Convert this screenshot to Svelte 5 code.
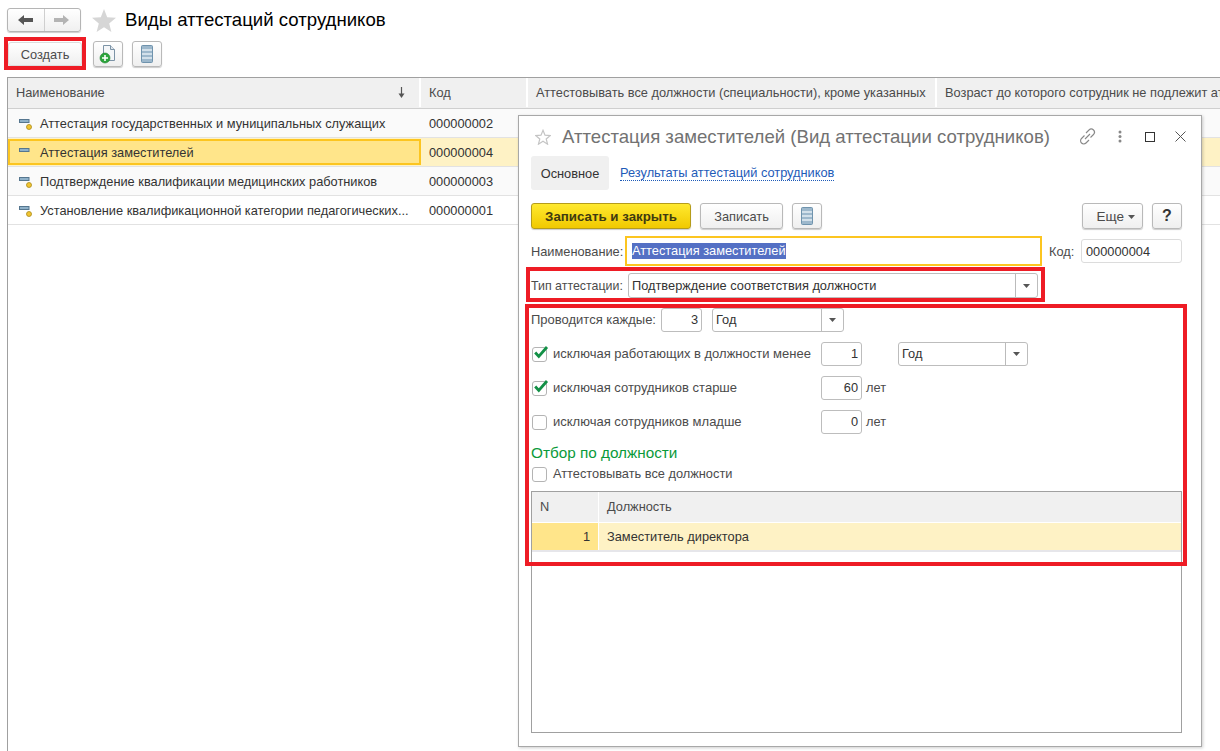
<script lang="ts">
	const rows = [
		{ name: 'Аттестация государственных и муниципальных служащих', code: '000000002', folder: false },
		{ name: 'Аттестация заместителей', code: '000000004', folder: true },
		{ name: 'Подтверждение квалификации медицинских работников', code: '000000003', folder: false },
		{ name: 'Установление квалификационной категории педагогических...', code: '000000001', folder: false }
	];
</script>

{#snippet listIcon()}
	<svg width="12" height="18" viewBox="0 0 12 18">
		<rect x="0.5" y="0.5" width="11" height="17" rx="1" fill="#9db8cc" stroke="#6f93ad" />
		<path d="M1 5h10M1 9h10M1 13h10" stroke="#e4edf3" stroke-width="1.4" />
	</svg>
{/snippet}

{#snippet tick()}
	<svg class="tick" width="17" height="16" viewBox="0 0 17 16">
		<path d="M3.200 7.500l3.600 4L15 2" fill="none" stroke="#129046" stroke-width="2.800" />
	</svg>
{/snippet}

{#snippet caret()}
	<svg width="7" height="4" viewBox="0 0 7 4"><path d="M0 0h7L3.500 4z" fill="#555" /></svg>
{/snippet}

<div class="page">
	<header class="top">
		<div class="nav">
			<button class="nav-btn" aria-label="Назад">
				<svg width="16" height="12" viewBox="0 0 16 12"><path d="M0 6l6-5v3h9v4H6v3z" fill="#555" /></svg>
			</button>
			<button class="nav-btn" aria-label="Вперед">
				<svg width="16" height="12" viewBox="0 0 16 12"><path d="M15 6L9 1v3H0v4h9v3z" fill="#b4b4b4" /></svg>
			</button>
		</div>
		<svg class="star" width="24" height="23" viewBox="0 0 24 23">
			<path d="M12 0l3.200 8.300 8.800.5-6.800 5.600 2.200 8.600L12 18.200l-7.400 4.800 2.200-8.600L0 8.800l8.800-.5z" fill="#d6d6d6" />
		</svg>
		<h1>Виды аттестаций сотрудников</h1>
	</header>

	<div class="toolbar">
		<button class="btn create">Создать</button>
		<button class="btn icon" aria-label="Создать документ">
			<svg width="18" height="20" viewBox="0 0 18 20">
				<path d="M4.500 1.500h7l4 4v11h-11z" fill="#f4f6f8" stroke="#7c93a6" />
				<path d="M11.500 1.500v4h4" fill="#dfe6ec" stroke="#7c93a6" />
				<circle cx="6" cy="14" r="5" fill="#2ca53c" stroke="#1d7f2d" stroke-width="0.6" />
				<path d="M6 11v6M3 14h6" stroke="#fff" stroke-width="1.6" />
			</svg>
		</button>
		<button class="btn icon" aria-label="Список">{@render listIcon()}</button>
	</div>

	<section class="list">
		<div class="list-head">
			<div class="th th-name">
				Наименование
				<svg class="sort" width="7" height="11" viewBox="0 0 7 11">
					<path d="M3.500 0v9" stroke="#555" stroke-width="1.200" /><path d="M.5 6.500L3.500 11l3-4.500z" fill="#555" />
				</svg>
			</div>
			<div class="th th-code">Код</div>
			<div class="th th-all">Аттестовывать все должности (специальности), кроме указанных</div>
			<div class="th th-age">Возраст до которого сотрудник не подлежит аттестации</div>
		</div>
		{#each rows as row}
			<div class="list-row" class:current={row.folder}>
				<div class="td td-name">
					<svg width="16" height="14" viewBox="0 0 16 14">
						<rect x="1.500" y="3.500" width="9.500" height="3" fill="#8fb1c9" stroke="#55768f" />
						{#if !row.folder}
							<circle cx="11" cy="11" r="2.500" fill="#f3c531" stroke="#a88a1c" stroke-width="0.8" />
						{/if}
					</svg>
					<span>{row.name}</span>
				</div>
				<div class="td td-code">{row.code}</div>
			</div>
		{/each}
	</section>

	<section class="dialog">
		<div class="dlg-title">
			<svg width="16" height="16" viewBox="0 0 24 23">
				<path d="M12 1.500l3 7.300 8 .5-6.200 5.100 2 7.800L12 17.800l-6.800 4.400 2-7.800L1 9.300l8-.5z" fill="#fff" stroke="#c4c4c4" stroke-width="1.800" />
			</svg>
			<h2>Аттестация заместителей (Вид аттестации сотрудников)</h2>
			<div class="win-icons">
				<svg width="17" height="17" viewBox="0 0 17 17">
					<path d="M7 5l3-3a3 3 0 0 1 4.500 4.500l-3 3M10 12l-3 3A3 3 0 0 1 2.500 10.500l3-3M6 11l5-5" fill="none" stroke="#888" stroke-width="1.100" />
				</svg>
				<svg class="dots" width="4" height="13" viewBox="0 0 4 13">
					<circle cx="2" cy="2" r="1.500" fill="#888" /><circle cx="2" cy="6.500" r="1.500" fill="#888" /><circle cx="2" cy="11" r="1.500" fill="#888" />
				</svg>
				<span class="maxi"></span>
				<svg class="close" width="11" height="11" viewBox="0 0 11 11"><path d="M.5.500l10 10M10.500.500l-10 10" stroke="#555" /></svg>
			</div>
		</div>

		<nav class="tabs">
			<span class="tab">Основное</span>
			<a href="#results" class="tab-link">Результаты аттестаций сотрудников</a>
		</nav>

		<div class="actions">
			<button class="btn primary">Записать и закрыть</button>
			<button class="btn save">Записать</button>
			<button class="btn icon" aria-label="Список">{@render listIcon()}</button>
			<div class="spacer"></div>
			<button class="btn more">Еще <span class="more-caret">{@render caret()}</span></button>
			<button class="btn help">?</button>
		</div>

		<div class="name-row">
			<span class="label name-label">Наименование:</span>
			<div class="focus-input"><span class="selected">Аттестация заместителей</span></div>
			<span class="label code-label">Код:</span>
			<div class="field code">000000004</div>
		</div>

		<div class="type-row">
			<span class="label type-label">Тип аттестации:</span>
			<div class="field combo type">
				<span>Подтверждение соответствия должности</span>
				<i class="drop">{@render caret()}</i>
			</div>
		</div>

		<div class="period-row">
			<span class="label period-label">Проводится каждые:</span>
			<div class="field num">3</div>
			<div class="field combo period"><span>Год</span><i class="drop">{@render caret()}</i></div>
		</div>

		<div class="check-row">
			<span class="check">{@render tick()}</span>
			<span class="check-label">исключая работающих в должности менее</span>
			<div class="field num">1</div>
			<div class="field combo period2"><span>Год</span><i class="drop">{@render caret()}</i></div>
		</div>
		<div class="check-row">
			<span class="check">{@render tick()}</span>
			<span class="check-label">исключая сотрудников старше</span>
			<div class="field num">60</div>
			<span class="unit">лет</span>
		</div>
		<div class="check-row">
			<span class="check"></span>
			<span class="check-label">исключая сотрудников младше</span>
			<div class="field num">0</div>
			<span class="unit">лет</span>
		</div>

		<h3>Отбор по должности</h3>
		<div class="all-row">
			<span class="check"></span>
			<span class="check-label">Аттестовывать все должности</span>
		</div>

		<div class="grid">
			<div class="grid-head">
				<div class="gh gh-n">N</div>
				<div class="gh gh-pos">Должность</div>
			</div>
			<div class="grid-row">
				<div class="gc-n">1</div>
				<div class="gc-pos">Заместитель директора</div>
			</div>
		</div>
	</section>

	<!-- красные рамки поверх скриншота -->
	<div class="mark mark-create"></div>
	<div class="mark mark-type"></div>
	<div class="mark mark-form"></div>
</div>

<style>
	:global(body) {
		margin: 0;
		background: #fff;
	}

	.page {
		position: relative;
		width: 1220px;
		height: 751px;
		overflow: hidden;
		font-family: 'Liberation Sans', Arial, sans-serif;
		font-size: 12.8px;
		color: #4b4b4b;
		background: #fff;
	}

	button {
		font-family: inherit;
		padding: 0;
		margin: 0;
	}

	.top {
		display: flex;
		align-items: center;
		height: 24px;
		padding: 8px 0 0 7px;
	}

	.nav {
		display: flex;
		width: 74px;
		height: 24px;
		box-sizing: border-box;
		border: 1px solid #b5b5b5;
		border-radius: 3px;
		background: linear-gradient(#fff, #f0f0f0);
		box-shadow: 0 1px 1px rgba(0, 0, 0, 0.2);
	}

	.nav-btn {
		flex: 1;
		border: none;
		background: none;
		display: flex;
		align-items: center;
		justify-content: center;
	}

	.nav-btn + .nav-btn {
		border-left: 1px solid #cfcfcf;
	}

	.star {
		margin-left: 11px;
	}

	h1 {
		margin: 0 0 0 9px;
		font-size: 18.600px;
		font-weight: 400;
		color: #000;
	}

	.toolbar {
		display: flex;
		align-items: center;
		gap: 9px;
		height: 26px;
		padding: 9px 0 0 8px;
	}

	.btn {
		box-sizing: border-box;
		height: 26px;
		border: 1px solid #b9b9b9;
		border-radius: 3px;
		background: linear-gradient(#fff, #efefef);
		box-shadow: 0 1px 1px rgba(0, 0, 0, 0.2);
		color: #4b4b4b;
		font-size: 12.8px;
		display: inline-flex;
		align-items: center;
		justify-content: center;
	}

	.create {
		width: 74px;
		height: 24px;
		border-color: #ddd;
		margin-right: 2px;
	}

	.icon {
		width: 30px;
	}

	.list {
		box-sizing: border-box;
		height: 674px;
		margin: 10px 0 0 7px;
		border-top: 1px solid #a0a0a0;
		border-left: 1px solid #a0a0a0;
	}

	.list-head {
		display: flex;
		height: 30px;
		background: #f0f0f0;
		border-bottom: 1px solid #cfcfcf;
	}

	.th {
		box-sizing: border-box;
		padding: 0 8px;
		line-height: 29px;
		white-space: nowrap;
		border-right: 2px solid #fff;
		height: 29px;
	}

	.th-name {
		width: 413px;
		position: relative;
	}

	.sort {
		position: absolute;
		right: 14px;
		top: 9px;
	}

	.th-code {
		width: 107px;
	}

	.th-all {
		width: 409px;
	}

	.th-age {
		flex: 1;
		border: none;
		overflow: hidden;
	}

	.list-row {
		display: flex;
		height: 29px;
		box-sizing: border-box;
		border-bottom: 1px solid #e2e2e2;
		background: #fff;
		color: #333;
	}

	.list-row:nth-child(2),
	.list-row:nth-child(4) {
		background: #fafafa;
	}

	.td {
		display: flex;
		align-items: center;
		box-sizing: border-box;
		white-space: nowrap;
	}

	.td-name {
		width: 413px;
		padding-left: 10px;
		gap: 6px;
	}

	.td-code {
		padding-left: 8px;
		flex: 1;
	}

	.current {
		background: #fef2c5;
	}

	.current .td-name {
		height: 26px;
		margin-top: 1px;
		background: #ffe58a;
		border: 2px solid #fcc520;
		padding-left: 8px;
	}

	.dialog {
		position: absolute;
		left: 518px;
		top: 115px;
		box-sizing: border-box;
		width: 684px;
		height: 632px;
		background: #fff;
		border: 1px solid #a8a8a8;
		box-shadow: 1px 1px 3px rgba(0, 0, 0, 0.2);
		padding: 0 19px 0 12px;
	}

	.dlg-title {
		display: flex;
		align-items: center;
		height: 40px;
		padding: 1px 0 0 4px;
		box-sizing: border-box;
	}

	h2 {
		margin: 0 0 0 11px;
		font-size: 18.600px;
		font-weight: 400;
		color: #727272;
		white-space: nowrap;
	}

	.win-icons {
		display: flex;
		align-items: center;
		position: absolute;
		right: 15px;
		top: 12px;
		height: 17px;
	}

	.dots {
		margin-left: 22px;
	}

	.maxi {
		display: block;
		box-sizing: border-box;
		width: 10px;
		height: 10px;
		margin-left: 23px;
		border: 1.5px solid #333;
	}

	.close {
		margin-left: 20px;
	}

	.tabs {
		display: flex;
		align-items: center;
		height: 34px;
	}

	.tab {
		display: flex;
		align-items: center;
		justify-content: center;
		width: 78px;
		height: 34px;
		border-radius: 3px;
		background: #f0f0f0;
		color: #333;
	}

	.tab-link {
		margin-left: 11px;
		color: #1e5bb8;
		text-decoration: none;
		border-bottom: 1px dotted #1e5bb8;
		line-height: 14px;
	}

	.actions {
		display: flex;
		align-items: center;
		height: 26px;
		margin-top: 13px;
	}

	.primary {
		width: 160px;
		font-weight: 700;
		font-size: 13.300px;
		color: #3f3a10;
		background: linear-gradient(#ffe92f, #f1c900);
		border-color: #b59c1b;
	}

	.save {
		width: 83px;
		margin-left: 9px;
	}

	.actions .icon {
		margin-left: 9px;
	}

	.spacer {
		flex: 1;
	}

	.more {
		width: 61px;
		gap: 4px;
		justify-content: flex-end;
		padding-right: 7px;
		font-size: 13.500px;
	}

	.more-caret {
		display: flex;
		margin-top: 1px;
	}

	.help {
		width: 30px;
		margin-left: 9px;
		font-size: 16px;
		font-weight: 700;
		color: #333;
	}

	.name-row {
		display: flex;
		align-items: center;
		height: 30px;
		margin-top: 7px;
	}

	.label {
		white-space: nowrap;
	}

	.name-label {
		width: 94px;
	}

	.focus-input {
		box-sizing: border-box;
		width: 417px;
		height: 30px;
		border: 2px solid #fcc520;
		display: flex;
		align-items: center;
		padding-left: 5px;
	}

	.selected {
		background: #5470c4;
		color: #fff;
		line-height: 16px;
	}

	.code-label {
		width: 26px;
		margin-left: 7px;
	}

	.field {
		box-sizing: border-box;
		height: 24px;
		border: 1px solid #bdbdbd;
		border-radius: 3px;
		display: flex;
		align-items: center;
		background: #fff;
		color: #333;
	}

	.code {
		width: 101px;
		margin-left: 6px;
		padding-left: 4px;
		border-color: #dcdcdc;
	}

	.type-row {
		display: flex;
		align-items: center;
		height: 25px;
		margin-top: 7px;
	}

	.type-label {
		width: 97px;
		font-size: 12.400px;
	}

	.combo {
		position: relative;
		padding-left: 3px;
	}

	.type {
		width: 410px;
		height: 25px;
	}

	.drop {
		position: absolute;
		right: 0;
		top: 0;
		bottom: 0;
		width: 21px;
		border-left: 1px solid #bbb;
		display: flex;
		align-items: center;
		justify-content: center;
	}

	.period-row {
		display: flex;
		align-items: center;
		height: 24px;
		margin-top: 10px;
	}

	.period-label {
		width: 124px;
		font-size: 13px;
		padding-bottom: 2px;
	}

	.num {
		width: 41px;
		justify-content: flex-end;
		padding: 0 3px 2px 0;
		margin-left: 6px;
	}

	.period,
	.period2 {
		padding-bottom: 2px;
	}

	.period {
		width: 132px;
		margin-left: 10px;
	}

	.period2 {
		width: 130px;
	}

	.check-row {
		display: flex;
		align-items: center;
		height: 24px;
		margin-top: 10px;
	}

	.check-label {
		width: 268px;
		margin-left: 6px;
		white-space: nowrap;
		padding-bottom: 2px;
	}

	.check-row .check-label {
		font-size: 13px;
	}

	.check-row .num {
		margin-left: 0;
	}

	.check-row .period2 {
		margin-left: 36px;
	}

	.check {
		position: relative;
		flex: none;
		box-sizing: border-box;
		width: 15px;
		height: 15px;
		margin-left: 1px;
		border: 1px solid #b4b4b4;
		border-radius: 3px;
		background: #fff;
	}

	.tick {
		position: absolute;
		left: -1px;
		top: -3px;
	}

	.unit {
		margin-left: 4px;
		padding-bottom: 2px;
	}

	h3 {
		margin: 9px 0 0;
		font-size: 15.300px;
		line-height: 20px;
		font-weight: 400;
		color: #0a9a3a;
	}

	.all-row {
		display: flex;
		align-items: center;
		height: 16px;
		margin-top: 3px;
	}

	.grid {
		box-sizing: border-box;
		height: 242px;
		margin-top: 9px;
		border: 1px solid #a0a0a0;
	}

	.grid-head {
		display: flex;
		height: 30px;
		background: #f0f0f0;
		border-bottom: 1px solid #fff;
	}

	.gh {
		padding-left: 8px;
		line-height: 29px;
		box-sizing: border-box;
	}

	.gh-n,
	.gc-n {
		width: 67px;
		flex: none;
		box-sizing: border-box;
		border-right: 1px solid #fff;
	}

	.grid-row {
		display: flex;
		height: 29px;
		line-height: 28px;
		box-sizing: border-box;
		border-bottom: 2px solid #e6e6ea;
		color: #333;
		background: #fef2c5;
	}

	.gc-n {
		background: #ffe58a;
		text-align: right;
		padding-right: 8px;
	}

	.gc-pos {
		padding-left: 8px;
	}

	.mark {
		position: absolute;
		box-sizing: border-box;
		border: 4px solid #ee1c25;
		pointer-events: none;
	}

	.mark-create {
		left: 4px;
		top: 37px;
		width: 82px;
		height: 33px;
	}

	.mark-type {
		left: 526px;
		top: 267px;
		width: 519px;
		height: 35px;
	}

	.mark-form {
		left: 525px;
		top: 304px;
		width: 662px;
		height: 262px;
	}
</style>
